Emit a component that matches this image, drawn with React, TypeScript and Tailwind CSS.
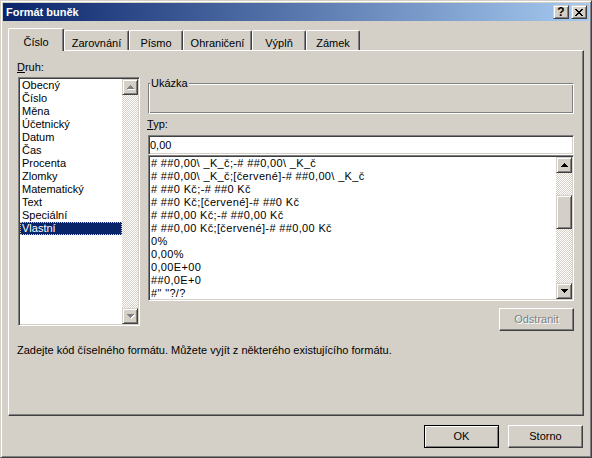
import type { ReactNode } from 'react'

// classic 3D edges
const raisedBtn =
  'border border-t-white border-l-white border-r-[#404040] border-b-[#404040] shadow-[inset_-1px_-1px_0_#808080]'
const raisedSmall =
  'border border-t-[#d4d0c8] border-l-[#d4d0c8] border-r-[#404040] border-b-[#404040] shadow-[inset_1px_1px_0_#ffffff,inset_-1px_-1px_0_#808080]'
const sunken =
  'border border-t-[#808080] border-l-[#808080] border-r-white border-b-white shadow-[inset_1px_1px_0_#404040,inset_-1px_-1px_0_#d4d0c8]'
const etched =
  'border border-t-[#808080] border-l-[#808080] border-r-white border-b-white shadow-[inset_1px_1px_0_#ffffff,inset_-1px_-1px_0_#808080]'
const checker =
  'bg-[image:repeating-conic-gradient(#ffffff_0%_25%,#d4d0c8_0%_50%)] bg-[length:2px_2px]'

const UP = ['...X...', '..XXX..', '.XXXXX.', 'XXXXXXX']
const DOWN = [...UP].reverse()
const CLOSE = ['XX....XX', '.XX..XX.', '..XXXX..', '...XX...', '..XXXX..', '.XX..XX.', 'XX....XX']

const tabs = [
  { label: 'Číslo', w: 'w-[56px]', selected: true },
  { label: 'Zarovnání', w: 'w-[65px]' },
  { label: 'Písmo', w: 'w-[54px]' },
  { label: 'Ohraničení', w: 'w-[69px]' },
  { label: 'Výplň', w: 'w-[54px]' },
  { label: 'Zámek', w: 'w-[54px]' },
]

const kinds = [
  'Obecný',
  'Číslo',
  'Měna',
  'Účetnický',
  'Datum',
  'Čas',
  'Procenta',
  'Zlomky',
  'Matematický',
  'Text',
  'Speciální',
  'Vlastní',
]

const formats = [
  '# ##0,00\\ _K_č;-# ##0,00\\ _K_č',
  '# ##0,00\\ _K_č;[červené]-# ##0,00\\ _K_č',
  '# ##0 Kč;-# ##0 Kč',
  '# ##0 Kč;[červené]-# ##0 Kč',
  '# ##0,00 Kč;-# ##0,00 Kč',
  '# ##0,00 Kč;[červené]-# ##0,00 Kč',
  '0%',
  '0,00%',
  '0,00E+00',
  '##0,0E+0',
  '#" "?/?',
]

function Pixels({ rows, color, shadow }: { rows: string[]; color: string; shadow?: string }) {
  const w = rows[0].length + (shadow ? 1 : 0)
  const h = rows.length + (shadow ? 1 : 0)
  const cells = (fill: string, d: number) =>
    rows.flatMap((row, y) =>
      [...row].map((c, x) =>
        c === 'X' ? (
          <rect key={`${fill}-${x}-${y}`} x={x + d} y={y + d} width={1} height={1} fill={fill} />
        ) : null,
      ),
    )
  return (
    <svg width={w} height={h} shapeRendering="crispEdges" className="block">
      {shadow && cells(shadow, 1)}
      {cells(color, 0)}
    </svg>
  )
}

function ScrollButton({ dir, disabled }: { dir: 'up' | 'down'; disabled?: boolean }) {
  return (
    <div className={`h-[16px] w-[16px] shrink-0 bg-[#d4d0c8] pl-[4px] pt-[5px] ${raisedSmall}`}>
      <Pixels
        rows={dir === 'up' ? UP : DOWN}
        color={disabled ? '#808080' : '#000000'}
        shadow={disabled ? '#ffffff' : undefined}
      />
    </div>
  )
}

function CaptionButton({ children, className = '' }: { children: ReactNode; className?: string }) {
  return (
    <div className={`flex h-[14px] w-[16px] justify-center bg-[#d4d0c8] ${raisedSmall} ${className}`}>
      {children}
    </div>
  )
}

export default function App() {
  return (
    <div
      className={`h-[458px] w-[592px] bg-[#d4d0c8] p-[2px] font-['Liberation_Sans',Arial,sans-serif] text-[11px] leading-[13px] text-black ${raisedSmall}`}
    >
      {/* Title bar */}
      <div className="flex h-[18px] items-center bg-[linear-gradient(to_right,#0a246a,#a6caf0)] pl-[3px] pr-[2px]">
        <span className="flex-1 font-bold text-white">Formát buněk</span>
        <div className="flex gap-[2px]">
          <CaptionButton className="items-center">
            <span className="text-[12px] font-bold leading-none">?</span>
          </CaptionButton>
          <CaptionButton className="pt-[3px]">
            <Pixels rows={CLOSE} color="#000000" />
          </CaptionButton>
        </div>
      </div>

      <div className="ml-[5px] w-[576px]">
        {/* Tabs */}
        <div className="mt-[7px] flex h-[22px] items-end">
          {tabs.map((t) => (
            <div
              key={t.label}
              className={`${t.w} rounded-t-[2px] border-t border-l border-r border-t-white border-l-white border-r-[#404040] bg-[#d4d0c8] text-center shadow-[inset_-1px_0_0_#808080] ${
                t.selected ? 'relative z-10 -mb-px h-[23px] pt-[7px]' : 'h-[20px] pt-[6px]'
              }`}
            >
              {t.label}
            </div>
          ))}
        </div>

        {/* Tab page */}
        <div className={`h-[366px] w-[576px] pl-[9px] pr-[9px] pt-[10px] ${raisedBtn}`}>
          <div className="grid grid-cols-[122px_426px] gap-x-[8px]">
            {/* Druh */}
            <div className="flex flex-col">
              <div className="-ml-px">
                <span className="underline">D</span>ruh:
              </div>
              <div className={`mt-[3px] flex h-[249px] bg-white p-px ${sunken}`}>
                <ul className="flex-1">
                  {kinds.map((k) => (
                    <li
                      key={k}
                      className={`h-[13px] whitespace-nowrap pl-[2px] ${
                        k === 'Vlastní'
                          ? 'bg-[#0a246a] text-white outline-1 -outline-offset-1 outline-dotted outline-[#e8c87a]'
                          : ''
                      }`}
                    >
                      {k}
                    </li>
                  ))}
                </ul>
                <div className="flex w-[16px] flex-col">
                  <ScrollButton dir="up" disabled />
                  <div className={`flex-1 ${checker}`} />
                  <ScrollButton dir="down" disabled />
                </div>
              </div>
            </div>

            {/* Ukázka + Typ */}
            <div className="flex flex-col pt-[16px]">
              {/* group box: caption sits over the etched top line */}
              <span className="relative z-10 ml-[2px] self-start bg-[#d4d0c8] px-px">Ukázka</span>
              <div className={`-mt-[7px] h-[31px] ${etched}`} />

              <div className="-ml-px mt-[4px]">
                <span className="underline">T</span>yp:
              </div>
              <div className={`mt-[4px] flex h-[20px] items-center bg-white pl-px ${sunken}`}>0,00</div>

              <div className={`flex h-[146px] bg-white p-px ${sunken}`}>
                <ul className="flex-1 overflow-hidden pl-px tracking-[0.35px]">
                  {formats.map((f) => (
                    <li key={f} className="h-[13px] whitespace-pre">
                      {f}
                    </li>
                  ))}
                </ul>
                <div className="flex w-[16px] flex-col">
                  <ScrollButton dir="up" />
                  <div className={`flex-1 ${checker}`}>
                    <div className={`mt-[22px] h-[34px] bg-[#d4d0c8] ${raisedSmall}`} />
                  </div>
                  <ScrollButton dir="down" />
                </div>
              </div>

              <button
                type="button"
                disabled
                className={`mt-[7px] flex h-[23px] w-[75px] items-center justify-center self-end text-[#808080] [text-shadow:1px_1px_0_#ffffff] ${raisedBtn}`}
              >
                Odstranit
              </button>
            </div>
          </div>

          <p className="-ml-px mt-[13px] whitespace-nowrap">
            Zadejte kód číselného formátu. Můžete vyjít z některého existujícího formátu.
          </p>
        </div>

        {/* Dialog buttons */}
        <div className="mt-[9px] flex justify-end gap-[9px] pr-px">
          <button
            type="button"
            className="flex h-[23px] w-[75px] items-center justify-center border border-black shadow-[inset_1px_1px_0_#ffffff,inset_-1px_-1px_0_#808080]"
          >
            OK
          </button>
          <button type="button" className={`flex h-[23px] w-[75px] items-center justify-center ${raisedBtn}`}>
            Storno
          </button>
        </div>
      </div>
    </div>
  )
}
